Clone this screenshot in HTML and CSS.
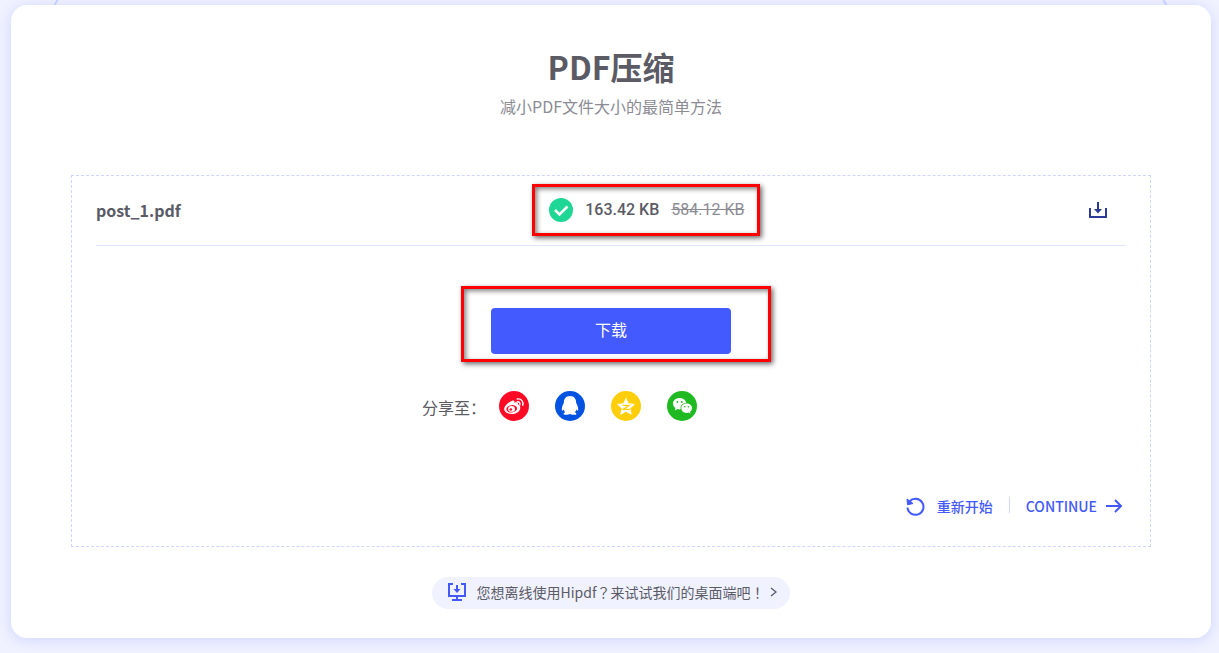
FILE: index.html
```html
<!DOCTYPE html>
<html lang="zh-CN">
<head>
    <meta charset="UTF-8">
    <meta name="viewport" content="width=device-width, initial-scale=1.0">
    <title>PDF压缩</title>
    <link rel="stylesheet" href="styles.css">
</head>
<body>
    <svg class="curve curve-left" viewBox="0 0 8 8" aria-hidden="true"><path d="M6 -1L1 8" /></svg>
    <svg class="curve curve-right" viewBox="0 0 8 8" aria-hidden="true"><path d="M2 -1L7 8" /></svg>
    <main class="card">
        <h1>PDF压缩</h1>
        <p class="subtitle">减小PDF文件大小的最简单方法</p>

        <section class="panel">
            <div class="file-row">
                <span class="file-name">post_1.pdf</span>
                <div class="file-size marked">
                    <svg width="24" height="24" viewBox="0 0 24 24" aria-hidden="true">
                        <circle cx="12" cy="12" r="12" fill="#1fd795" />
                        <path d="M6 12L10.500 16.500L18.500 8.500" fill="none" stroke="#fff" stroke-width="2.600" />
                    </svg>
                    <strong>163.42 KB</strong>
                    <del>584.12 KB</del>
                </div>
                <button class="icon-button" type="button" aria-label="下载 post_1.pdf">
                    <svg width="18" height="16" viewBox="0 0 18 16" fill="none" stroke="#2d3a96" stroke-width="2" aria-hidden="true">
                        <path d="M1 6V15H17V6" />
                        <path d="M9 0V10" />
                        <path d="M5 7H13L9 11.5Z" fill="#2d3a96" stroke="none" />
                    </svg>
                </button>
            </div>

            <div class="download marked">
                <button class="download-button" type="button">下载</button>
            </div>

            <div class="share">
                <span class="share-label">分享至：</span>
                <a href="#" aria-label="微博">
                    <svg width="30" height="30" viewBox="0 0 30 30">
                        <circle cx="15" cy="15" r="15" fill="#ff0a24" />
                        <path fill="#fff" d="M13.2 9.7c1.5-.7 2.700 0 2.100 2 2.200-.9 4.100-.5 3.500 1.600 5 1.700 2.200 9.700-6 9.700-4 0-7.600-2-7.600-5 0-3 4.300-6.900 8-8.300z" />
                        <ellipse cx="12.700" cy="17.800" rx="5.400" ry="3.700" fill="#ff0a24" transform="rotate(-8 12.700 17.800)" />
                        <ellipse cx="12.500" cy="17.900" rx="3.500" ry="2.900" fill="#fff" />
                        <circle cx="11.800" cy="18.500" r="1.300" fill="#ff0a24" />
                        <path d="M18.300 10.800c2-.3 3 1.200 2.500 3M18.200 8c4.300-.7 6.600 2.800 5.500 6.300" fill="none" stroke="#fff" stroke-width="1.400" stroke-linecap="round" />
                    </svg>
                </a>
                <a href="#" aria-label="QQ">
                    <svg width="30" height="30" viewBox="0 0 30 30">
                        <circle cx="15" cy="15" r="15" fill="#0052e0" />
                        <path fill="#fff" d="M15 5c-4.200 0-6.200 2.900-6.100 6.700-1 1.700-2.300 4.600-2.100 7 .1 1.500.9 1.300 1.800-.1.300 1.100.8 2 1.500 2.700-1.300.6-1.700 1.300-1.400 1.900.5.800 5 .8 6.300-.2 1.300 1 5.800 1 6.300.2.3-.6-.1-1.300-1.400-1.900.7-.7 1.200-1.600 1.500-2.700.9 1.400 1.700 1.600 1.800.1.200-2.400-1.100-5.300-2.100-7C21.200 7.900 19.200 5 15 5z" />
                    </svg>
                </a>
                <a href="#" aria-label="QQ空间">
                    <svg width="30" height="30" viewBox="0 0 30 30">
                        <circle cx="15" cy="15" r="15" fill="#ffce0a" />
                        <path fill="#fff" stroke="#fff" stroke-linejoin="round" d="M15 7.500l2.300 5.200 6 .7-4.500 3.900 1.400 5.900L15 20.200 9.800 23.200l1.400-5.900-4.500-3.900 6-.7z" />
                        <path d="M11.500 14.300H18L12.300 18.400H18.800" fill="none" stroke="#ffce0a" stroke-width="1.300" />
                    </svg>
                </a>
                <a href="#" aria-label="微信">
                    <svg width="30" height="30" viewBox="0 0 30 30">
                        <circle cx="15" cy="15" r="15" fill="#1fb922" />
                        <path fill="#fff" d="M12.500 7C8.800 7 6 9.400 6 12.600c0 1.900 1 3.500 2.500 4.500L7.800 19.500l2.600-1.400c1 .2 2.200.4 3.300.2-.8-3.800 2-6.400 5.500-6.400C18.600 8.900 15.800 7 12.500 7z" />
                        <path fill="#fff" d="M19.600 12.500c-3.100 0-5.300 2.100-5.300 4.700s2.300 4.700 5.300 4.700c.7 0 1.300-.1 1.900-.3l2.100 1.200-.6-2c1.300-.9 2-2.200 2-3.600 0-2.600-2.400-4.700-5.400-4.700z" />
                        <g fill="#1fb922">
                            <circle cx="10.400" cy="11" r="0.900" />
                            <circle cx="14.800" cy="11" r="0.900" />
                            <circle cx="17.800" cy="15.800" r="0.800" />
                            <circle cx="21.400" cy="15.800" r="0.800" />
                        </g>
                    </svg>
                </a>
            </div>

            <div class="actions">
                <a class="restart" href="#">
                    <svg width="20" height="20" viewBox="0 0 20 20" aria-hidden="true">
                        <path d="M4.500 4.500A8 8 0 1 1 2.500 10.500" fill="none" stroke="#4359fa" stroke-width="2" />
                        <path d="M2 2L2.500 7.800L8 6.500Z" fill="#4359fa" stroke="#4359fa" />
                    </svg>
                    <span>重新开始</span>
                </a>
                <a class="continue" href="#">
                    <span>CONTINUE</span>
                    <svg width="17" height="16" viewBox="0 0 17 16" fill="none" stroke="#4359fa" stroke-width="2" aria-hidden="true">
                        <path d="M0 7H15M9 1L15 7L9 13" />
                    </svg>
                </a>
            </div>
        </section>

        <a class="desktop-link" href="#">
            <svg width="18" height="18" viewBox="0 0 18 18" fill="none" stroke="#4359fa" stroke-width="2" aria-hidden="true">
                <path d="M5 1H1V13H17V1H13M9 13V17M4 17H14M9 2V8" />
                <path d="M5.500 6H12.500L9 10Z" fill="#4359fa" stroke="none" />
            </svg>
            <span class="desktop-text">您想离线使用Hipdf<span class="mark" lang="zh-TW">？</span>来试试我们的桌面端吧<span class="mark" lang="zh-TW">！</span></span>
            <svg width="7" height="10" viewBox="0 0 7 10" fill="none" stroke="#5b5b66" stroke-width="1.300" aria-hidden="true">
                <path d="M1 1L6 5L1 9" />
            </svg>
        </a>
    </main>
</body>
</html>
```

FILE: styles.css
```css
* {
    box-sizing: border-box;
}
body {
    margin: 0;
    padding: 5px 8px 15px 11px;
    background-color: #f0f2ff;
    color: #5b5b66;
    font-family: "Noto Sans CJK SC", sans-serif;
    font-size: 16px;
}
a {
    color: inherit;
    text-decoration: none;
}
svg {
    display: block;
    flex-shrink: 0;
}
.curve {
    position: absolute;
    top: 0;
    width: 8px;
    height: 8px;
    fill: none;
    stroke: #cbd5ff;
    stroke-width: 2;
}
.curve-left {
    left: 52px;
}
.curve-right {
    right: 50px;
}
.card {
    position: relative;
    padding: 37px 60px 29px;
    background: white;
    border-radius: 16px;
    box-shadow: 0 2px 14px rgba(67, 89, 250, 0.18);
}
h1 {
    margin: 0;
    font-size: 32px;
    line-height: 48px;
    text-align: center;
}
.subtitle {
    margin: 4px 0 57px;
    color: #8b8b94;
    line-height: 24px;
    text-align: center;
}
.panel {
    padding: 0 24px 29px;
    border: 1px dashed #d0d5ff;
}
.file-row {
    display: grid;
    grid-template-columns: 44% 1fr auto;
    align-items: center;
    height: 70px;
    padding-bottom: 2px;
    border-bottom: 1px solid #e1e4ff;
    margin-bottom: 62px;
}
.file-name {
    font-weight: 700;
}
.file-size {
    display: flex;
    align-items: center;
    justify-self: start;
    gap: 12px;
    font-family: Roboto, sans-serif;
}
.file-size strong {
    font-weight: 500;
}
.file-size del {
    color: #8b8b94;
}
.icon-button {
    padding: 0 19px 0 0;
    border: none;
    background: none;
    cursor: pointer;
}
/* red highlight frame drawn over the content */
.marked {
    position: relative;
}
.marked::after {
    content: "";
    position: absolute;
    inset: -14px -16px -14px -17px;
    border: 3px solid #ff0000;
    box-shadow: 2px 2px 5px rgba(0, 0, 0, 0.6), inset 2px 2px 5px rgba(0, 0, 0, 0.5);
    pointer-events: none;
}
.download {
    width: 240px;
    margin: 0 auto;
}
.download.marked::after {
    inset: -22px -40px -8px -30px;
}
.download-button {
    display: block;
    width: 100%;
    height: 46px;
    padding: 0 0 4px;
    border: none;
    border-radius: 4px;
    background-color: #435aff;
    color: white;
    font-family: inherit;
    font-size: 16px;
    cursor: pointer;
}
.share {
    display: flex;
    align-items: center;
    gap: 26px;
    width: 378px;
    margin: 37px auto 76px;
}
.share-label {
    margin-right: -13px;
    padding-top: 2px;
}
.actions {
    display: flex;
    justify-content: flex-end;
    align-items: center;
    height: 20px;
    padding-right: 3px;
    color: #4359fa;
    font-size: 14px;
    font-weight: 500;
    line-height: 18px;
}
.actions span {
    padding-bottom: 2px;
}
.restart,
.continue {
    display: flex;
    align-items: center;
}
.restart {
    position: relative;
    gap: 12px;
    padding-right: 17px;
}
.restart::after {
    content: "";
    position: absolute;
    top: 0;
    right: 0;
    width: 1px;
    height: 16px;
    background-color: #d0d5ff;
}
.continue {
    gap: 9px;
    padding-left: 16px;
}
.desktop-link {
    display: flex;
    align-items: center;
    width: fit-content;
    height: 32px;
    margin: 30px auto 0;
    padding: 0 13px 2px 16px;
    border-radius: 16px;
    background-color: #f0f2ff;
    font-size: 14px;
}
.desktop-text {
    margin: 0 6px 0 11px;
}
/* full-width marks centred in their square */
.mark {
    font-family: "Noto Sans CJK TC", sans-serif;
}
```
